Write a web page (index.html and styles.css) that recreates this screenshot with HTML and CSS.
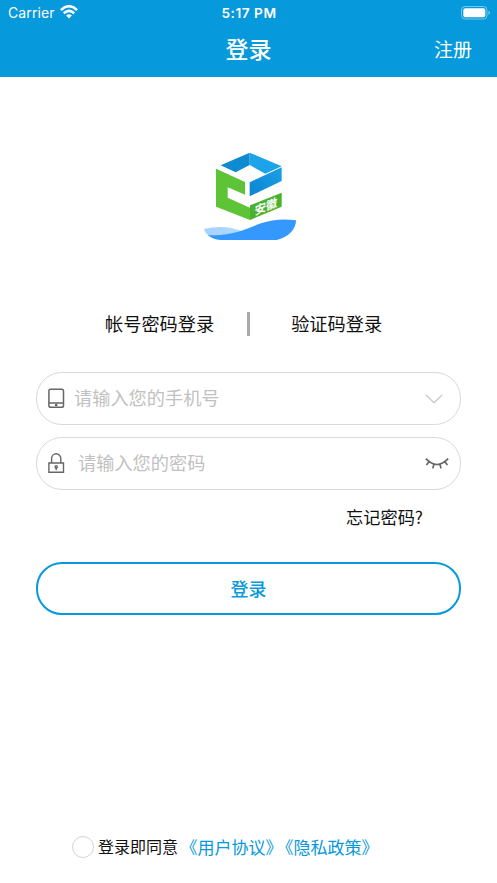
FILE: index.html
```html
<!DOCTYPE html>
<html lang="zh-CN">
<head>
<meta charset="utf-8">
<title>登录</title>
<link rel="stylesheet" href="styles.css">
</head>
<body>
<header class="header">
  <div class="status">
    <div class="carrier"><span>Carrier</span>
      <svg class="wifi" width="18" height="14" viewBox="0 0 18 14" fill="none" stroke="#fff" stroke-width="2.6"><path d="M.9 5.1Q9-2.6 17.1 5.1M3.8 8.3Q9 3.4 14.2 8.3"/><path d="M6.1 10.5Q9 8.1 11.9 10.5L9 13.4z" fill="#fff" stroke="none"/></svg>
    </div>
    <span class="time">5:17 PM</span>
    <svg class="battery" width="29" height="14" viewBox="0 0 29 14"><rect x=".5" y=".5" width="25.5" height="12.5" rx="3.5" fill="none" stroke="#fff" stroke-opacity=".45"/><rect x="2.3" y="2.3" width="22" height="9" rx="2" fill="#fff"/><path d="M27.5 4.8q1.5.5 1.5 2t-1.5 2z" fill="#fff" fill-opacity=".5"/></svg>
  </div>
  <nav class="nav">
    <h1 class="title">登录</h1>
    <a class="register">注册</a>
  </nav>
</header>
<main class="main">
  <svg class="logo" width="110" height="100" viewBox="0 0 330 300">
    <defs>
      <linearGradient id="side" x1="0" y1="1" x2="1" y2="0"><stop stop-color="#0b84cf"/><stop offset="1" stop-color="#1da0e8"/></linearGradient>
      <linearGradient id="wave"><stop stop-color="#a3d2ff"/><stop offset="1" stop-color="#b5d9ff"/></linearGradient>
    </defs>
    <path fill="#0e8ad0" d="M77 61L164 23V60L122 82z"/>
    <path fill="#1ca3ea" d="M164 23L260 64L211 86L164 60z"/>
    <path fill="url(#side)" d="M260 67V108L164 154V112z"/>
    <path fill="#5dc437" d="M63 71L150 111V149L98 127V158L165 188V225L63 185z"/>
    <path fill="#4bb12e" d="M165 181L260 143V185L165 225z"/>
    <text class="logo-text" transform="matrix(.97 -.39 0 1 179 211)">安徽</text>
    <path fill="url(#wave)" d="M27 252C70 241 112 245 145 260L120 272H42C34 267 29 260 27 252z"/>
    <path fill="#3498ff" d="M38 270C110 275 155 250 198 235Q247 218 303 226C304 251 281 278 245 285H76Q53 283 38 270z"/>
  </svg>
  <div class="tabs">
    <span class="tab">帐号密码登录</span>
    <i class="divider"></i>
    <span class="tab">验证码登录</span>
  </div>
  <div class="field">
    <svg class="icon" width="18" height="22" viewBox="0 0 18 22" fill="none" stroke="#666" stroke-width="1.5"><rect x=".9" y="1.2" width="14.6" height="18" rx="1.8"/><path d="M.9 15h14.6"/><circle cx="8.2" cy="17.1" r=".6" fill="#666"/></svg>
    <span class="hint">请输入您的手机号</span>
    <svg class="chevron" width="18" height="10" viewBox="0 0 18 10" fill="none" stroke="#bfbfbf" stroke-width="1.1"><path d="M.8.8L9 8.7L17.2.8"/></svg>
  </div>
  <div class="field">
    <svg class="icon" width="18" height="22" viewBox="0 0 18 22" fill="none" stroke="#666" stroke-width="1.4"><path d="M.9 10h14.6v9.2H.9zM3.6 10V5.4a4.6 4.6 0 0 1 9.2 0V10M8.2 14.5v2.7"/><circle cx="8.2" cy="13.8" r="1.2"/></svg>
    <span class="hint hint-password">请输入您的密码</span>
    <svg class="eye" width="24" height="14" viewBox="0 0 24 14" fill="none" stroke="#666" stroke-width="1.7"><path d="M.8 1.7Q12 13.3 23.2 1.7M4 4.7L1.5 8M8.9 7.2L7.8 11.4M14.9 7.2L16 11.4M19.8 4.8L22.5 8"/></svg>
  </div>
  <a class="forgot">忘记密码?</a>
  <button class="submit">登录</button>
</main>
<footer class="agreement">
  <i class="check"></i>
  <span class="agree">登录即同意</span>
  <a class="link">《用户协议》</a>
  <a class="link">《隐私政策》</a>
</footer>
</body>
</html>
```
FILE: styles.css
```css
* { box-sizing: border-box; }
body {
  margin: 0;
  height: 883px;
  display: flex;
  flex-direction: column;
  background: #fff;
  color: #111;
  font-family: "Noto Sans CJK SC", sans-serif;
}
svg { display: block; flex: none; }
.header { height: 77px; background: #0699db; color: #fff; }
.status {
  height: 25px;
  padding: 0 7px 0 8px;
  display: grid;
  grid-template-columns: 1fr auto 1fr;
  align-items: center;
  font-family: Inter, sans-serif;
  font-size: 14px;
}
.carrier { display: flex; align-items: center; gap: 5px; letter-spacing: .1px; }
.wifi { margin-bottom: 1px; }
.time { font-weight: 600; font-size: 13.7px; letter-spacing: .5px; }
.battery { justify-self: end; }
.nav {
  height: 47px;
  padding: 0 25px;
  display: grid;
  grid-template-columns: 1fr auto 1fr;
  align-items: center;
}
.title { grid-column: 2; margin: 0; padding-bottom: 2px; font-size: 23px; font-weight: 500; line-height: 34px; }
.register { justify-self: end; font-size: 19px; line-height: 28px; }
.main { flex: 1; padding: 68px 36px 0; display: flex; flex-direction: column; }
.logo { margin-left: 159px; }
.logo-text { font-size: 35px; font-weight: 700; fill: #fff; }
.tabs {
  margin: 64px 0 0 69px;
  height: 30px;
  display: flex;
  align-items: center;
  font-size: 18.2px;
}
.tab { padding-bottom: 2px; }
.divider { width: 3px; height: 24px; margin: 0 41px 0 33px; background: #aaa; }
.field {
  height: 53px;
  margin-bottom: 12px;
  padding: 0 12px 0 11px;
  display: flex;
  align-items: center;
  border: 1px solid #d9d9d9;
  border-radius: 26px;
}
.tabs + .field { margin-top: 33px; }
.hint { flex: 1; margin-left: 8px; padding-bottom: 3px; color: #c1c1c1; font-size: 18.2px; line-height: 28px; }
.hint-password { margin-left: 12px; }
.chevron { margin-right: 5px; }
.eye { margin-right: -1px; }
.forgot { align-self: flex-end; margin: 2px 38px 0 0; font-size: 17.2px; line-height: 26px; }
.submit {
  height: 53px;
  margin-top: 32px;
  padding: 0 0 2px;
  border: 2.5px solid #0699db;
  border-radius: 26px;
  background: #fff;
  color: #0699db;
  font: 500 18px "Noto Sans CJK SC", sans-serif;
}
.agreement {
  height: 36px;
  margin-bottom: 18px;
  padding-left: 72px;
  display: flex;
  align-items: center;
}
.check { width: 22px; height: 22px; margin-right: 4px; border: 1px solid #d4d4d4; border-radius: 50%; }
.agree { padding-bottom: 2px; font-size: 16px; }
.link {
  margin-left: 11px;
  padding-bottom: 2px;
  color: #0699db;
  font-size: 17px;
  font-feature-settings: "halt";
  white-space: nowrap;
}
```
